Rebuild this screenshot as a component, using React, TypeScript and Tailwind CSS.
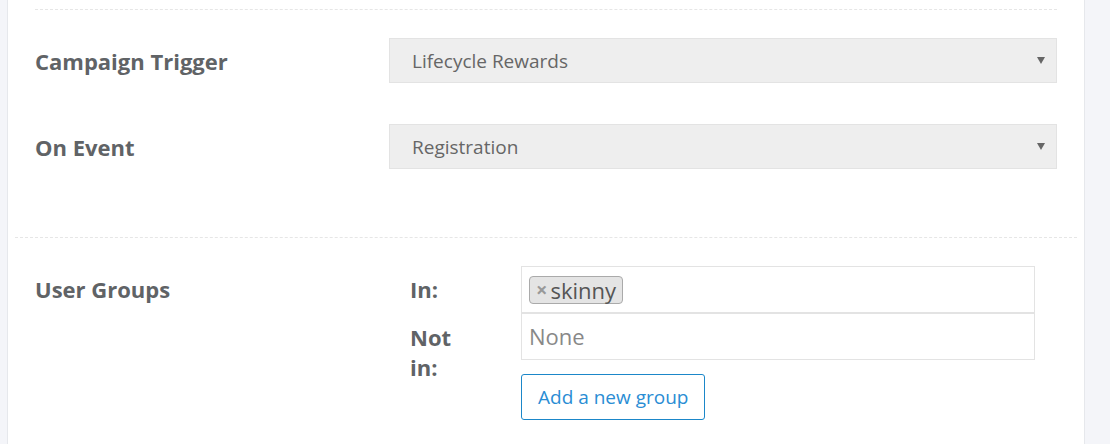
// Campaign settings form panel
const SELECTS = [
  { label: "Campaign Trigger", value: "Lifecycle Rewards" },
  { label: "On Event", value: "Registration" },
];

function FakeSelect({ value }: { value: string }) {
  return (
    <div className="w-[668px] h-[45px] bg-[#eeeeee] border border-[#e3e3e3] flex items-center justify-between pl-[22px] pr-[11px]">
      <span className="pt-[2px] text-[19px] text-[#666666]">{value}</span>
      <span className="w-0 h-0 border-l-[4px] border-r-[4px] border-t-[7px] border-l-transparent border-r-transparent border-t-[#666666]" />
    </div>
  );
}

export default function App() {
  return (
    <div className="w-[1110px] h-[444px] overflow-hidden flex bg-[#f4f5f9] font-['Open_Sans',sans-serif]">
      {/* left gutter */}
      <div className="w-[8px] shrink-0 bg-[#f4f5f9] border-r border-[#e6e8ec]" />

      {/* main panel */}
      <div className="w-[1077px] shrink-0 bg-white border-r border-[#e6e8ec] flex flex-col">
        <div className="px-[27px]">
          <div className="mt-[9px] border-t border-dashed border-[#e6e6e6] pt-[28px] flex flex-col gap-[41px]">
            {SELECTS.map((s) => (
              <div key={s.label} className="flex items-center">
                <div className="w-[354px] pt-[1px] text-[22px] font-bold text-[#606366]">{s.label}</div>
                <FakeSelect value={s.value} />
              </div>
            ))}
          </div>
        </div>

        {/* user groups */}
        <div className="mx-[7px] mt-[68px] border-t border-dashed border-[#e6e6e6] pt-[28px] px-[20px] flex">
          <div className="w-[375px] h-[47px] flex items-center text-[22px] font-bold text-[#606366]">
            User Groups
          </div>
          <div className="flex flex-col">
            <div className="flex">
              <div className="w-[111px] h-[47px] flex items-center text-[22px] font-bold text-[#606366]">In:</div>
              <div className="w-[514px] h-[47px] border border-[#e3e3e3] flex items-center px-[7px]">
                <span className="h-[28px] flex items-center gap-[3px] pl-[6px] pr-[6px] bg-[#e4e4e4] border border-[#aaaaaa] rounded-[4px]">
                  <span className="text-[20px] font-bold text-[#999999] leading-none">×</span>
                  <span className="text-[22px] text-[#555555] leading-none">skinny</span>
                </span>
              </div>
            </div>
            <div className="flex">
              <div className="w-[111px]">
                <div className="w-[60px] pt-[9px] text-[22px] leading-[30px] font-bold text-[#606366]">Not in:</div>
              </div>
              <div className="flex flex-col items-start">
                <div className="w-[514px] h-[47px] border border-[#e3e3e3] flex items-center px-[7px]">
                  <span className="text-[22px] text-[#888888]">None</span>
                </div>
                <button
                  type="button"
                  className="mt-[14px] h-[46px] px-[16px] border border-[#1b87c9] rounded-[3px] text-[19px] text-[#2a8dd4] bg-white"
                >
                  Add a new group
                </button>
              </div>
            </div>
          </div>
        </div>
      </div>
    </div>
  );
}
